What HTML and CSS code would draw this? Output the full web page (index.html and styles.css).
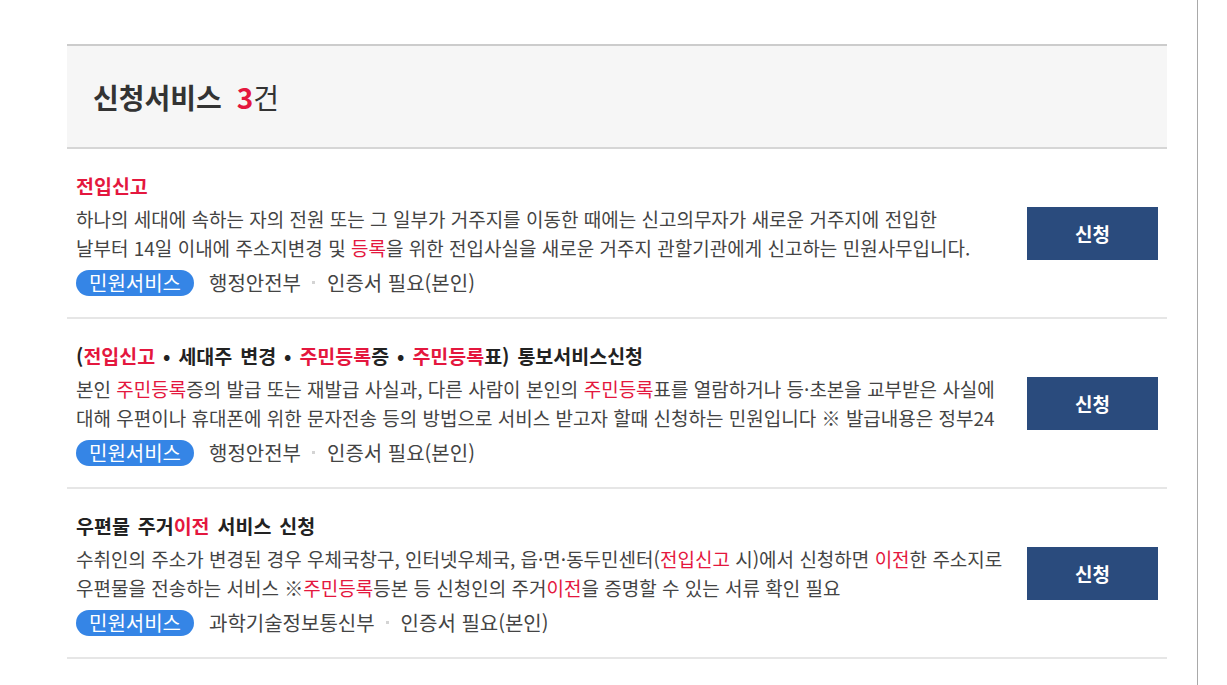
FILE: index.html
```html
<!DOCTYPE html>
<html lang="ko">
<head>
<meta charset="utf-8">
<title>신청서비스</title>
<link rel="stylesheet" href="styles.css">
</head>
<body>
<div class="page">
  <section class="panel">
    <header class="panel-head">
      <h2 class="panel-title">신청서비스 <em class="count">3</em><span class="unit">건</span></h2>
    </header>
    <ul class="svc-list">
      <li class="svc">
        <div class="svc-body">
          <h3 class="svc-title"><span class="hl">전입신고</span></h3>
          <p class="svc-desc">
            <span class="line">하나의 세대에 속하는 자의 전원 또는 그 일부가 거주지를 이동한 때에는 신고의무자가 새로운 거주지에 전입한</span>
            <span class="line">날부터 14일 이내에 주소지변경 및 <span class="hl">등록</span>을 위한 전입사실을 새로운 거주지 관할기관에게 신고하는 민원사무입니다.</span>
          </p>
          <div class="svc-meta">
            <span class="badge">민원서비스</span>
            <span class="meta-item">행정안전부</span>
            <span class="meta-dot"></span>
            <span class="meta-item">인증서 필요(본인)</span>
          </div>
        </div>
        <a class="btn-apply" href="#">신청</a>
      </li>
      <li class="svc">
        <div class="svc-body">
          <h3 class="svc-title">(<span class="hl">전입신고</span> • 세대주 변경 • <span class="hl">주민등록</span>증 • <span class="hl">주민등록</span>표) 통보서비스신청</h3>
          <p class="svc-desc">
            <span class="line">본인 <span class="hl">주민등록</span>증의 발급 또는 재발급 사실과, 다른 사람이 본인의 <span class="hl">주민등록</span>표를 열람하거나 등·초본을 교부받은 사실에</span>
            <span class="line">대해 우편이나 휴대폰에 위한 문자전송 등의 방법으로 서비스 받고자 할때 신청하는 민원입니다 ※ 발급내용은 정부24</span>
          </p>
          <div class="svc-meta">
            <span class="badge">민원서비스</span>
            <span class="meta-item">행정안전부</span>
            <span class="meta-dot"></span>
            <span class="meta-item">인증서 필요(본인)</span>
          </div>
        </div>
        <a class="btn-apply" href="#">신청</a>
      </li>
      <li class="svc">
        <div class="svc-body">
          <h3 class="svc-title">우편물 주거<span class="hl">이전</span> 서비스 신청</h3>
          <p class="svc-desc">
            <span class="line">수취인의 주소가 변경된 경우 우체국창구, 인터넷우체국, 읍·면·동두민센터(<span class="hl">전입신고</span> 시)에서 신청하면 <span class="hl">이전</span>한 주소지로</span>
            <span class="line">우편물을 전송하는 서비스 ※<span class="hl">주민등록</span>등본 등 신청인의 주거<span class="hl">이전</span>을 증명할 수 있는 서류 확인 필요</span>
          </p>
          <div class="svc-meta">
            <span class="badge">민원서비스</span>
            <span class="meta-item">과학기술정보통신부</span>
            <span class="meta-dot"></span>
            <span class="meta-item">인증서 필요(본인)</span>
          </div>
        </div>
        <a class="btn-apply" href="#">신청</a>
      </li>
    </ul>
  </section>
  <div class="scroll-edge"></div>
</div>
</body>
</html>
```

FILE: styles.css
```css
* { box-sizing: border-box; }
html, body { margin: 0; padding: 0; background: #fff; }
body {
  font-family: "Noto Sans CJK KR", "Noto Sans", sans-serif;
  color: #444;
  height: 685px;
  overflow: hidden;
}
.page {
  display: flex;
  height: 685px;
  padding-left: 67px;
}
.panel {
  width: 1100px;
  padding-top: 44px;
}
.scroll-edge {
  margin-left: 30px;
  width: 1px;
  background: #a9a9a9;
  height: 685px;
}
.panel-head {
  background: #f6f6f6;
  border-top: 2px solid #cccccc;
  border-bottom: 2px solid #d6d6d6;
  height: 105px;
  display: flex;
  align-items: center;
  padding-left: 26px;
}
.panel-title {
  margin: 0;
  font-size: 28px;
  font-weight: 700;
  color: #333;
  line-height: 32px;
  padding-top: 1px;
}
.count {
  font-style: normal;
  color: #e4173e;
  margin-left: 7px;
}
.unit { font-weight: 400; }
.svc-list { list-style: none; margin: 0; padding: 0; }
.svc {
  display: flex;
  align-items: center;
  height: 170px;
  border-bottom: 2px solid #e6e6e6;
  padding: 0 9px;
}
.svc-body { flex: 1; padding-top: 1px; }
.svc-title {
  margin: 0;
  font-size: 19.5px;
  font-weight: 700;
  color: #222;
  line-height: 27px;
  word-spacing: 2.5px;
}
.hl { color: #e4173e; }
.svc-desc {
  margin: 5px 0 0;
  font-size: 19px;
  line-height: 29px;
  color: #444;
}
.line { display: block; white-space: nowrap; }
.svc-meta {
  display: flex;
  align-items: center;
  margin-top: 8px;
  font-size: 20px;
  color: #444;
}
.badge {
  display: inline-flex;
  align-items: center;
  justify-content: center;
  height: 26px;
  padding: 0 13px;
  border-radius: 13px;
  background: #3585e6;
  color: #fff;
  line-height: 26px;
  margin-right: 15px;
}
.meta-item { line-height: 26px; }
.meta-dot {
  width: 3px;
  height: 3px;
  background: #d4d4d4;
  margin: 0 12px 0 11px;
}
.btn-apply {
  flex: none;
  width: 131px;
  height: 53px;
  background: #2a4b7d;
  color: #fff;
  font-size: 19px;
  font-weight: 700;
  text-decoration: none;
  display: flex;
  align-items: center;
  justify-content: center;
}
```
